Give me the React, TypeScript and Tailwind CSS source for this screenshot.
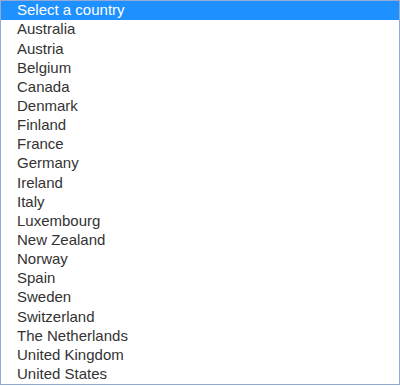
const countries = [
  "Australia",
  "Austria",
  "Belgium",
  "Canada",
  "Denmark",
  "Finland",
  "France",
  "Germany",
  "Ireland",
  "Italy",
  "Luxembourg",
  "New Zealand",
  "Norway",
  "Spain",
  "Sweden",
  "Switzerland",
  "The Netherlands",
  "United Kingdom",
  "United States",
];

// --- Country Listbox ---
export default function App() {
  return (
    <div className="h-[386px] w-[400px] bg-white font-['Liberation_Sans',Arial,sans-serif] text-[15px] text-[#333]">
      <div className="flex h-[385px] w-[400px] flex-col border border-[#93a9d6]">
        <div className="flex h-[19.15px] items-center bg-[#1e90ff] pl-4 text-white">
          Select a country
        </div>
        {countries.map((c) => (
          <div key={c} className="flex h-[19.15px] items-center pl-4">
            {c}
          </div>
        ))}
      </div>
    </div>
  );
}
